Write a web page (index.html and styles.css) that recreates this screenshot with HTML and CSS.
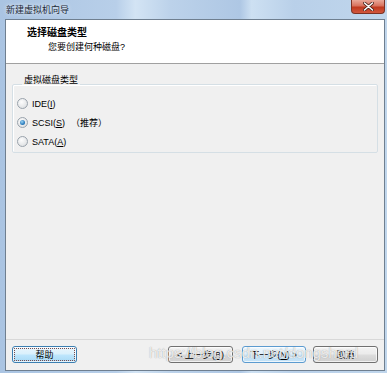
FILE: index.html
```html
<!DOCTYPE html>
<html lang="zh-CN">
<head>
    <meta charset="UTF-8">
    <title>新建虚拟机向导</title>
    <link rel="stylesheet" href="styles.css">
</head>
<body>
    <div class="window">
        <div class="titlebar">
            <span class="title">新建虚拟机向导</span>
            <span class="close">
                <svg width="11" height="9" viewBox="0 0 11 9">
                    <path d="M1.5 1 L9.5 8 M9.5 1 L1.5 8" stroke="#4a2018" stroke-width="3" stroke-linecap="round"/>
                    <path d="M1.5 1 L9.5 8 M9.5 1 L1.5 8" stroke="#fff" stroke-width="1.6" stroke-linecap="round"/>
                </svg>
            </span>
        </div>

        <div class="client">
            <div class="header">
                <div class="heading">选择磁盘类型</div>
                <div class="subheading">您要创建何种磁盘?</div>
            </div>

            <div class="body">
                <fieldset class="group">
                    <legend>虚拟磁盘类型</legend>
                    <label class="radio"><span class="dot"></span>IDE(<u>I</u>)</label>
                    <label class="radio"><span class="dot checked"></span>SCSI(<u>S</u>)<span class="hint">（推荐）</span></label>
                    <label class="radio"><span class="dot"></span>SATA(<u>A</u>)</label>
                </fieldset>
            </div>

            <div class="footer">
                <button class="btn help">帮助</button>
                <div class="nav">
                    <button class="btn">&lt; 上一步(<u>B</u>)</button>
                    <button class="btn default">下一步(<u>N</u>) &gt;</button>
                    <button class="btn cancel">取消</button>
                </div>
            </div>
        </div>

        <div class="watermark">https://blog.csdn.net/dongshord</div>
    </div>
</body>
</html>
```

FILE: styles.css
```css
body {
    margin: 0;
    padding: 0;
    background: #b4cce8;
    font-family: "Liberation Sans", "Noto Sans CJK SC", sans-serif;
    font-size: 9px;
    color: #000;
    overflow: hidden;
}
.window {
    position: relative;
    width: 387px;
    height: 373px;
    background: linear-gradient(90deg, #aac4e2 0%, #b8cfe9 30%, #d3e4f4 35%, #bcd2ea 44%, #aec7e4 62%, #cde0f2 65%, #b9d0e9 76%, #c0d6ec 100%);
}
.titlebar {
    height: 19px;
    display: flex;
    align-items: flex-start;
    padding-left: 6px;
}
.title {
    align-self: center;
    font-size: 9px;
    color: #1e2a38;
    text-shadow: 0 0 4px rgba(255, 255, 255, 0.9);
}
.close {
    margin-left: auto;
    margin-right: 2px;
    width: 32px;
    height: 13px;
    border: 1px solid #7c3224;
    border-top: none;
    border-radius: 0 0 4px 4px;
    background: linear-gradient(#e9a899 0%, #d8725e 45%, #c0391f 55%, #d1573d 100%);
    display: flex;
    align-items: center;
    justify-content: center;
}
.client {
    margin-left: 5px;
    width: 378px;
    border: 1px solid #6f7f90;
    background: #f0f0f0;
}
.header {
    height: 36px;
    padding: 7px 0 0 21px;
    background: #fff;
    border-bottom: 1px solid #a0a0a0;
}
.heading {
    font-size: 10px;
    font-weight: bold;
    line-height: 12px;
}
.subheading {
    margin: 2px 0 0 21px;
    line-height: 12px;
}
.body {
    height: 264px;
    padding: 11px 6px 0;
}
.group {
    margin: 0;
    padding: 0 4px 1px;
    border: 1px solid #d5dfe5;
    border-radius: 2px;
    box-shadow: inset 1px 1px 0 #fff;
}
.group legend {
    padding: 0 2px 8px;
    margin-left: 5px;
    line-height: 11px;
}
.radio {
    height: 19px;
    display: flex;
    align-items: center;
}
.radio u {
    text-decoration-thickness: 1px;
}
.dot {
    width: 9px;
    height: 9px;
    margin-right: 4px;
    border: 1px solid #9aa3ac;
    border-radius: 50%;
    background: radial-gradient(circle at 40% 35%, #fdfdfd 0%, #e2e4e6 70%, #cfd3d6 100%);
    display: flex;
    align-items: center;
    justify-content: center;
}
.dot.checked::after {
    content: "";
    width: 5px;
    height: 5px;
    border-radius: 50%;
    background: radial-gradient(circle at 40% 35%, #9cd4f4 0%, #2c7dbd 60%, #155b93 100%);
}
.hint {
    margin-left: 6px;
}
.footer {
    display: flex;
    align-items: flex-start;
    height: 24px;
    padding: 6px 6px 0;
    border-top: 1px solid #d8d8d8;
}
.nav {
    margin-left: auto;
    display: flex;
}
.btn {
    width: 65px;
    height: 17px;
    padding: 0;
    border: 1px solid #707070;
    border-radius: 3px;
    background: linear-gradient(#f3f3f3 0%, #ebebeb 48%, #dddddd 52%, #cfcfcf 100%);
    font-family: "Liberation Sans", "Noto Sans CJK SC", sans-serif;
    font-size: 9px;
    color: #000;
    box-shadow: inset 0 0 0 1px rgba(255, 255, 255, 0.7);
}
.btn.help {
    border-color: #3c7fb1;
    background: linear-gradient(#eaf6fd 0%, #d9f0fc 48%, #bee6fd 52%, #a7d9f5 100%);
    outline: 1px dotted #7a4a4a;
    outline-offset: -3px;
}
.btn.default {
    margin-left: 9px;
    width: 64px;
    border-color: #5b9bd0;
    background: linear-gradient(#eef7fd 0%, #e0f0fb 48%, #cde7f8 52%, #c0e0f6 100%);
}
.btn.cancel {
    margin-left: 7px;
}
.watermark {
    position: absolute;
    left: 149px;
    top: 344px;
    font-family: "Liberation Sans", sans-serif;
    font-size: 15px;
    color: rgba(255, 255, 255, 0.8);
    text-shadow: 0 0 1px rgba(90, 90, 90, 0.6);
    pointer-events: none;
}
```
